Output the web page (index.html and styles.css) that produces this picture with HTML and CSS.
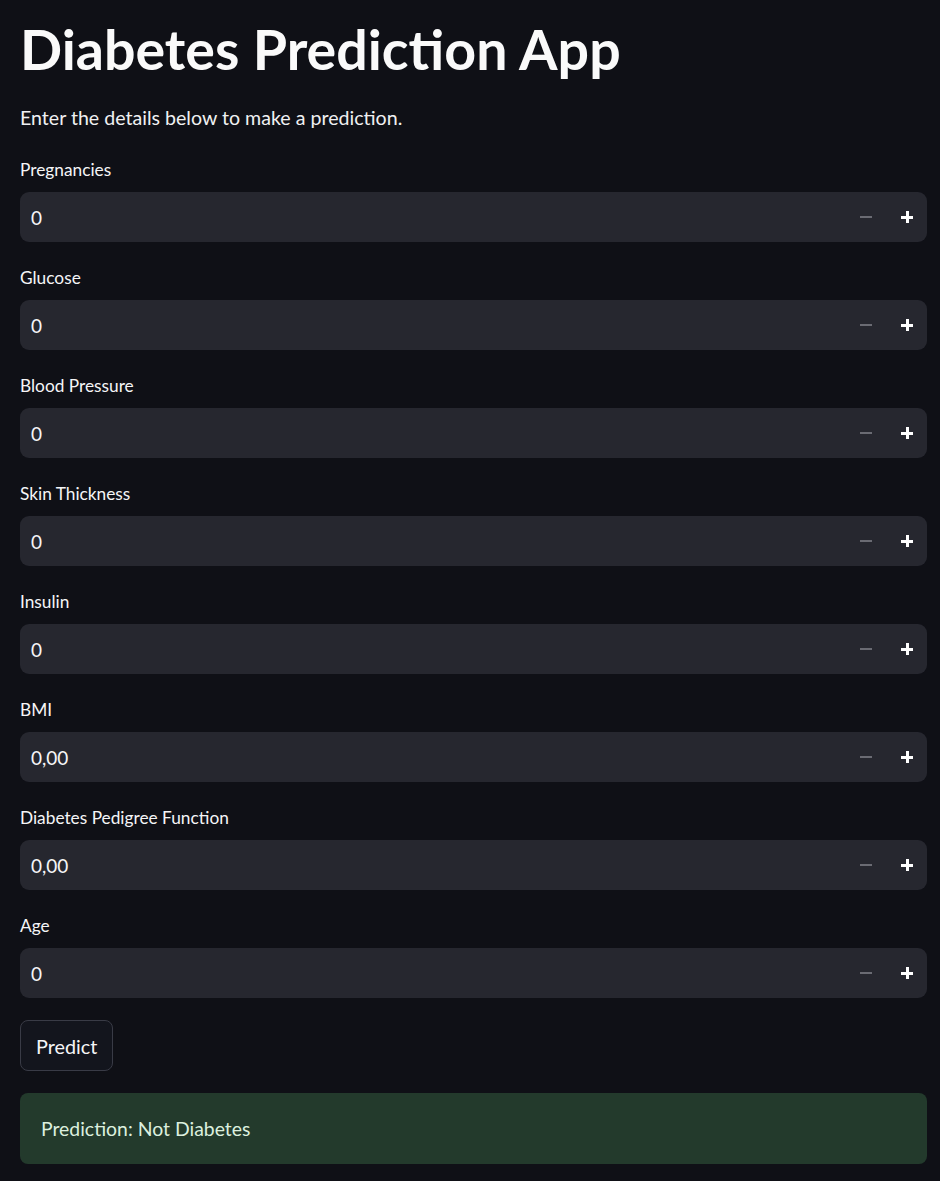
FILE: index.html
```html
<!DOCTYPE html>
<html>
<head>
<meta charset="utf-8">
<link rel="stylesheet" href="styles.css">
</head>
<body>
<main class="app">
  <h1 class="title">Diabetes Prediction App</h1>
  <p class="intro">Enter the details below to make a prediction.</p>

  <div class="field">
    <label class="label">Pregnancies</label>
    <div class="num"><span class="val">0</span><span class="steps"><span class="minus"></span><span class="plus"></span></span></div>
  </div>
  <div class="field">
    <label class="label">Glucose</label>
    <div class="num"><span class="val">0</span><span class="steps"><span class="minus"></span><span class="plus"></span></span></div>
  </div>
  <div class="field">
    <label class="label">Blood Pressure</label>
    <div class="num"><span class="val">0</span><span class="steps"><span class="minus"></span><span class="plus"></span></span></div>
  </div>
  <div class="field">
    <label class="label">Skin Thickness</label>
    <div class="num"><span class="val">0</span><span class="steps"><span class="minus"></span><span class="plus"></span></span></div>
  </div>
  <div class="field">
    <label class="label">Insulin</label>
    <div class="num"><span class="val">0</span><span class="steps"><span class="minus"></span><span class="plus"></span></span></div>
  </div>
  <div class="field">
    <label class="label">BMI</label>
    <div class="num"><span class="val">0,00</span><span class="steps"><span class="minus"></span><span class="plus"></span></span></div>
  </div>
  <div class="field">
    <label class="label">Diabetes Pedigree Function</label>
    <div class="num"><span class="val">0,00</span><span class="steps"><span class="minus"></span><span class="plus"></span></span></div>
  </div>
  <div class="field">
    <label class="label">Age</label>
    <div class="num"><span class="val">0</span><span class="steps"><span class="minus"></span><span class="plus"></span></span></div>
  </div>

  <button class="btn">Predict</button>
  <div class="success">Prediction: Not Diabetes</div>
</main>
</body>
</html>
```
FILE: styles.css
```css
html, body {
  margin: 0;
  padding: 0;
  background: #0f1016;
}
body {
  font-family: Lato, "Noto Sans", sans-serif;
  color: #f5f5f7;
}
.app {
  width: 907px;
  padding: 11px 0 0 20px;
  display: flex;
  flex-direction: column;
}
.title {
  margin: 0;
  font-size: 55.5px;
  font-weight: 700;
  line-height: 76px;
  height: 76px;
  color: #fafafa;
}
.intro {
  margin: 19px 0 25px 0;
  font-size: 19.6px;
  line-height: 24px;
  color: #f0f0f2;
}
.field {
  display: flex;
  flex-direction: column;
  margin-bottom: 21px;
}
.label {
  font-size: 17.3px;
  line-height: 30px;
  height: 30px;
  margin-bottom: 7px;
  color: #f5f5f7;
}
.num {
  height: 50px;
  border-radius: 9px;
  background: #26272f;
  display: flex;
  align-items: center;
  justify-content: space-between;
  padding-left: 11px;
}
.val {
  font-size: 19px;
  color: #f5f5f7;
}
.steps {
  display: flex;
  align-items: center;
  height: 100%;
  padding-right: 14px;
}
.minus, .plus {
  position: relative;
  width: 12px;
  height: 12px;
  margin-left: 29px;
}
.minus::before, .plus::before, .plus::after {
  content: "";
  position: absolute;
  background: #fff;
}
.minus::before {
  left: 0; right: 0; top: 5px; height: 2px;
  background: #6a6b73;
}
.plus::before {
  left: 0; right: 0; top: 4.5px; height: 3px;
}
.plus::after {
  top: 0; bottom: 0; left: 4.5px; width: 3px;
}
.btn {
  align-self: flex-start;
  margin-top: 1px;
  height: 51px;
  padding: 0 15px;
  font-family: inherit;
  font-size: 19.8px;
  color: #f5f5f7;
  background: #13151d;
  border: 1px solid #393b46;
  border-radius: 8px;
}
.success {
  margin-top: 22px;
  height: 71px;
  border-radius: 8px;
  background: #233a2c;
  color: #dcefdf;
  font-size: 19.4px;
  display: flex;
  align-items: center;
  padding-left: 21px;
}
```
